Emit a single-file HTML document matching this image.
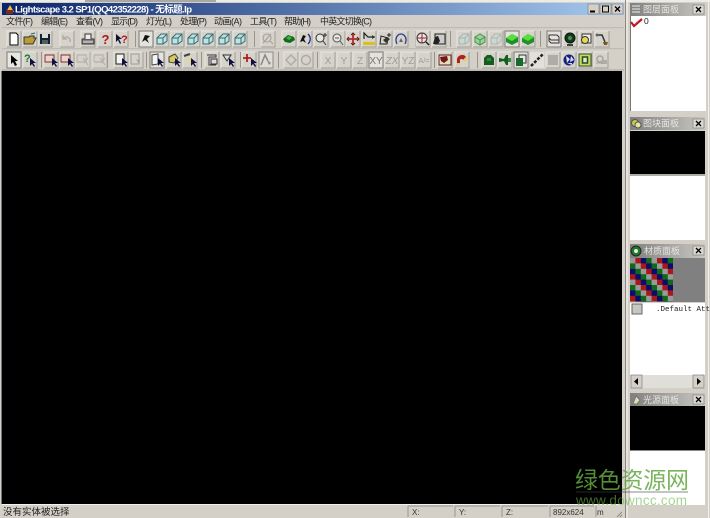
<!DOCTYPE html>
<html><head><meta charset="utf-8"><style>
html,body{margin:0;padding:0;background:#d4d0c8}
body{width:710px;height:518px;overflow:hidden;position:relative}
svg{position:absolute;left:0;top:0}
text{font-family:"Liberation Sans","WenQuanYi Zen Hei","Noto Sans CJK SC",sans-serif}
</style></head><body>
<svg width="710" height="518" viewBox="0 0 710 518" xmlns="http://www.w3.org/2000/svg">
<defs>
<linearGradient id="tb" x1="0" x2="1" y1="0" y2="0"><stop offset="0" stop-color="#0a246a"/><stop offset="1" stop-color="#a6caf0"/></linearGradient>
<linearGradient id="pt" x1="0" x2="1" y1="0" y2="0"><stop offset="0" stop-color="#808080"/><stop offset="1" stop-color="#c8c6c0"/></linearGradient>
<pattern id="ck" width="21.6" height="21.6" patternUnits="userSpaceOnUse" x="630" y="258">
<rect width="21.6" height="21.6" fill="#000"/>
<g fill="#9a9a9a"><rect x="0" y="0" width="5.4" height="5.4"/><rect x="5.4" y="5.4" width="5.4" height="5.4"/><rect x="10.8" y="10.8" width="5.4" height="5.4"/><rect x="16.2" y="16.2" width="5.4" height="5.4"/></g>
<g fill="#a81818"><rect x="5.4" y="0" width="5.4" height="5.4"/><rect x="10.8" y="5.4" width="5.4" height="5.4"/><rect x="16.2" y="10.8" width="5.4" height="5.4"/><rect x="0" y="16.2" width="5.4" height="5.4"/></g>
<g fill="#0b0b70"><rect x="10.8" y="0" width="5.4" height="5.4"/><rect x="16.2" y="5.4" width="5.4" height="5.4"/><rect x="0" y="10.8" width="5.4" height="5.4"/><rect x="5.4" y="16.2" width="5.4" height="5.4"/></g>
<g fill="#0f6a18"><rect x="16.2" y="0" width="5.4" height="5.4"/><rect x="0" y="5.4" width="5.4" height="5.4"/><rect x="5.4" y="10.8" width="5.4" height="5.4"/><rect x="10.8" y="16.2" width="5.4" height="5.4"/></g>
</pattern>
<g id="b"><rect x="-7" y="-8" width="14" height="16" fill="#d6d3cb"/><path d="M-7 8V-8H7" fill="none" stroke="#e8e6e0"/><path d="M-7 8H7V-8" fill="none" stroke="#a09e97"/></g>
<g id="a"><path d="M-1-3V5L1 3 3 6 4 5 2 2 5 2Z" fill="#101040"/></g>
<g id="cube"><path d="M-5-1 -1-5H5V2L1 5H-5Z" fill="#bfe3e2" stroke="#3a6a70"/><path d="M-5-1H1V5M1-1 5-5" fill="none" stroke="#3a6a70"/></g>
<g id="gc"><path d="M-6-1 0-5 6-2V3L0 6-6 3Z" fill="#1f8f2c"/><path d="M-6-1 0 2 6-2 0-5Z" fill="#55e03a"/></g>
</defs>

<!-- top strip -->
<rect width="710" height="518" fill="#d4d0c8"/>
<rect x="0" y="0" width="710" height="2" fill="#ecebe6"/>
<rect x="85" y="0" width="131" height="2" fill="#aaa8a2"/>
<!-- title bar -->
<rect x="2" y="3" width="622" height="12" fill="url(#tb)"/>
<path d="M6 12 10 5 14 12Z" fill="#e8c040"/><rect x="6" y="10" width="7" height="4" fill="#7a2a20"/>
<text x="15" y="12.500" font-size="9.500" font-weight="bold" fill="#fff" textLength="177">Lightscape 3.2 SP1(QQ42352228) - 无标题.lp</text>
<g><rect x="588" y="4" width="11" height="10" fill="#d4d0c8" stroke="#777" stroke-width=".6"/><rect x="590" y="10.500" width="5" height="2" fill="#000"/>
<rect x="600" y="4" width="11" height="10" fill="#d4d0c8" stroke="#777" stroke-width=".6"/><rect x="602.500" y="6" width="6" height="6" fill="none" stroke="#000"/>
<rect x="612" y="4" width="11" height="10" fill="#d4d0c8" stroke="#777" stroke-width=".6"/><path d="M615 6.500 620 11.500M620 6.500 615 11.500" stroke="#000" stroke-width="1.300"/></g>
<!-- menu -->
<g font-size="9" fill="#222">
<text x="6" y="24.500" textLength="27">文件(F)</text><text x="41" y="24.500" textLength="27">编辑(E)</text><text x="76" y="24.500" textLength="27">查看(V)</text><text x="111" y="24.500" textLength="27">显示(D)</text><text x="146" y="24.500" textLength="26">灯光(L)</text><text x="180" y="24.500" textLength="27">处理(P)</text><text x="214" y="24.500" textLength="28">动画(A)</text><text x="250" y="24.500" textLength="27">工具(T)</text><text x="284" y="24.500" textLength="27">帮助(H)</text><text x="320" y="24.500" textLength="52">中英文切换(C)</text>
</g>
<path d="M2 28.500H624" stroke="#f4f3ef"/><path d="M2 28H624" stroke="#a8a69f"/>
<path d="M2 49.500H624" stroke="#f4f3ef"/><path d="M2 49H624" stroke="#a8a69f"/>
<path d="M2 70H624" stroke="#a8a69f"/>

<!-- toolbar separators -->
<g stroke="#96948d" fill="none"><path d="M135.500 31V47M254.500 31V47M415.500 31V47M450.500 31V47M540.500 31V47M41.500 52V68M107.500 52V68M146.500 52V68M201.500 52V68M240.500 52V68M278.500 52V68M317.500 52V68M434.500 52V68M477.500 52V68"/></g>

<!-- row 1 -->
<g transform="translate(14 39)"><use href="#b"/><path d="M-4-6H2L4-4V6H-4Z" fill="#fff" stroke="#000"/></g>
<g transform="translate(30 39)"><use href="#b"/><path d="M-6-2H-1L0-3H4V-1H6L3 5H-6Z" fill="#b99c35" stroke="#333"/><path d="M1-5 5-6" stroke="#177" /></g>
<g transform="translate(45 39)"><use href="#b"/><rect x="-5" y="-5" width="10" height="10" fill="#123" /><rect x="-3" y="-5" width="6" height="4" fill="#d8dcd8"/><rect x="-3" y="1" width="6" height="4" fill="#50605a"/></g>
<g transform="translate(67 39)"><use href="#b"/><path d="M3 3C4-2-1-3-3-1M-4-4V0H0" fill="none" stroke="#a8a69f" stroke-width="1.200"/></g>
<g transform="translate(88 39)"><use href="#b"/><path d="M-6 0H6V5H-6Z" fill="#88867f" stroke="#333"/><path d="M-3 0V-5H3V0" fill="#eee" stroke="#333"/><path d="M-5 3H5" stroke="#ddd"/></g>
<g transform="translate(105 39)"><use href="#b"/><text x="-3.500" y="5" font-size="13" font-weight="bold" fill="#b01818">?</text></g>
<g transform="translate(121 39)"><use href="#b"/><path d="M-5-5V3L-3 1-1 5 0 4-2 0H1Z" fill="#101030"/><text x="0" y="4" font-size="11" font-weight="bold" fill="#b01818">?</text></g>
<g transform="translate(146 39)"><rect x="-7" y="-8" width="14" height="16" fill="#e4e2dc" stroke="#7c7a74"/><path d="M-4 3-1-4 4-3 1 0 3 4-1 1Z" fill="#111"/></g>
<g transform="translate(162 39)"><use href="#b"/><use href="#cube"/></g>
<g transform="translate(177 39)"><use href="#b"/><use href="#cube"/></g>
<g transform="translate(193 39)"><use href="#b"/><use href="#cube"/></g>
<g transform="translate(208 39)"><use href="#b"/><use href="#cube"/></g>
<g transform="translate(224 39)"><use href="#b"/><use href="#cube"/></g>
<g transform="translate(240 39)"><use href="#b"/><use href="#cube"/></g>
<g transform="translate(268 39)"><use href="#b"/><circle cx="-1" cy="-1" r="4" fill="none" stroke="#a09e97"/><path d="M2 2 5 5M-5 4 3-5" stroke="#a09e97"/></g>
<g transform="translate(289 39)"><use href="#b"/><path d="M-6 0-1-4 5-2 6 1 1 4-4 3Z" fill="#136a1c"/><path d="M-3-1 0-3 3-1 0 1Z" fill="#48b040"/></g>
<g transform="translate(305 39)"><use href="#b"/><path d="M-5 3-2-4 1-3-1 0 1 4-2 2Z" fill="#111"/><path d="M3-5C6-2 6 2 3 5" fill="none" stroke="#1a2a90" stroke-width="1.300"/></g>
<g transform="translate(321 39)"><use href="#b"/><circle cx="-1" cy="-1" r="4" fill="#e6e6e2" stroke="#333"/><path d="M2 2 5 6M4-6V-2M2-4H6" stroke="#333" fill="none"/></g>
<g transform="translate(338 39)"><use href="#b"/><circle cx="-1" cy="-1" r="4" fill="#e6e6e2" stroke="#555"/><path d="M2 2 5 6M-3-1H1" stroke="#555" fill="none"/></g>
<g transform="translate(353 39)"><use href="#b"/><path d="M0-6V6M-6 0H6" stroke="#a83030" stroke-width="1.800"/><path d="M-2-4 0-6 2-4M-2 4 0 6 2 4M-4-2-6 0-4 2M4-2 6 0 4 2" fill="none" stroke="#701818"/></g>
<g transform="translate(369 39)"><use href="#b"/><rect x="-6" y="3" width="12" height="3" fill="#d8c020"/><path d="M-5 0V-6L-1-2H6" fill="none" stroke="#222" stroke-width="1.200"/><path d="M3-4 6-2 3 0" fill="#333"/></g>
<g transform="translate(385 39)"><use href="#b"/><path d="M-5 5-4-3 3-1 2 5Z" fill="none" stroke="#222"/><path d="M-2 1 2-2 5 0 1 4Z" fill="#333"/><path d="M4-6V-2M2-4H6" stroke="#222" fill="none"/></g>
<g transform="translate(401 39)"><use href="#b"/><path d="M-4 5C-7-1-3-5 0-5S7-1 4 5" fill="none" stroke="#2c3a90" stroke-width="1.300"/><path d="M-2 3 0-1 2 3Z" fill="#666"/></g>
<g transform="translate(423 39)"><use href="#b"/><circle cx="-1" cy="-1" r="5" fill="#e6e6e2" stroke="#333"/><path d="M-6-1H4M-1-6V4" stroke="#a02020" fill="none"/><path d="M3 3 6 6" stroke="#222" stroke-width="1.500"/></g>
<g transform="translate(439 39)"><use href="#b"/><rect x="-4" y="-5" width="10" height="10" fill="#ccc" stroke="#222"/><path d="M-6 5-4-2-1-3 1 2-1 5Z" fill="#222"/></g>
<g transform="translate(464 39)"><use href="#b"/><g opacity=".3"><use href="#cube"/></g></g>
<g transform="translate(480 39)"><use href="#b"/><path d="M-5-2 0-5 5-2V3L0 6-5 3Z" fill="#9bd49a" stroke="#4a8f4a"/><path d="M-5-2 0 1 5-2M0 1V6" stroke="#4a8f4a" fill="none"/></g>
<g transform="translate(496 39)"><use href="#b"/><g opacity=".25"><use href="#cube"/></g></g>
<g transform="translate(512 39)"><rect x="-7" y="-8" width="14" height="16" fill="#e4e2dc" stroke="#7c7a74"/><use href="#gc"/></g>
<g transform="translate(528 39)"><use href="#b"/><use href="#gc"/></g>
<g transform="translate(554 39)"><rect x="-7" y="-8" width="14" height="16" fill="#e4e2dc" stroke="#7c7a74"/><path d="M-5-4H3L5-2V1H-3L-5-1ZM-5-1V2L-3 4H5V1" fill="none" stroke="#333"/></g>
<g transform="translate(570 39)"><use href="#b"/><circle cx="0" cy="-1" r="5" fill="#123a20" stroke="#111"/><circle cx="0" cy="-1" r="2" fill="#3a9a4a"/><path d="M-3 6H3" stroke="#111" stroke-width="1.500"/></g>
<g transform="translate(586 39)"><use href="#b"/><rect x="-4" y="-5" width="9" height="9" fill="#eee" stroke="#333"/><circle cx="-1" cy="1" r="3.500" fill="#e6d850" stroke="#333"/></g>
<g transform="translate(602 39)"><use href="#b"/><path d="M-5-4H0L3 3" fill="none" stroke="#333" stroke-width="1.500"/><path d="M1 3H6L5 6H2Z" fill="#7a5a20"/><circle cx="-5" cy="-4" r="1.500" fill="#666"/></g>

<!-- row 2 -->
<g transform="translate(14 60)"><rect x="-7" y="-8" width="14" height="16" fill="#e8e6e0" stroke="#7c7a74"/><path d="M-3-5V4L-1 2 1 6 3 5 1 1H4Z" fill="#000"/></g>
<g transform="translate(30 60)"><use href="#b"/><text x="-6" y="2" font-size="11" font-weight="bold" fill="#137a30">?</text><use href="#a" x="1" y="1"/></g>
<g transform="translate(51 60)"><use href="#b"/><rect x="-6" y="-5" width="9" height="7" fill="#e2d8d0" stroke="#902828"/><use href="#a" x="2" y="1"/></g>
<g transform="translate(67 60)"><use href="#b"/><rect x="-6" y="-5" width="9" height="7" fill="#e2d8d0" stroke="#902828"/><use href="#a" x="2" y="1"/></g>
<g transform="translate(83 60)" opacity=".7"><use href="#b"/><rect x="-6" y="-5" width="9" height="7" fill="none" stroke="#a09e97"/><path d="M0-2 5 5M5-2 1 3" stroke="#a09e97" fill="none"/></g>
<g transform="translate(100 60)" opacity=".7"><use href="#b"/><rect x="-6" y="-5" width="9" height="7" fill="none" stroke="#a09e97"/><path d="M0-2 5 5M5-2 1 3" stroke="#a09e97" fill="none"/></g>
<g transform="translate(121 60)"><use href="#b"/><rect x="-5" y="-6" width="8" height="10" fill="#f4f4f0" stroke="#222"/><use href="#a" x="2" y="1"/></g>
<g transform="translate(136 60)"><use href="#b"/><rect x="-5" y="-6" width="8" height="10" fill="none" stroke="#a09e97"/><path d="M0-1 3 4 4 1Z" fill="#a09e97"/></g>
<g transform="translate(157 60)"><rect x="-7" y="-8" width="14" height="16" fill="#e4e2dc" stroke="#7c7a74"/><path d="M-5-5 1-6V4L-5 5Z" fill="#f4f4f0" stroke="#444"/><use href="#a" x="2" y="1"/></g>
<g transform="translate(174 60)"><use href="#b"/><path d="M-5-3 1-6 4-2 0 3-5 2Z" fill="#d8c860" stroke="#444"/><use href="#a" x="2" y="1"/></g>
<g transform="translate(190 60)"><use href="#b"/><path d="M-6-4 0-6" stroke="#444" stroke-width="2"/><path d="M-3 3-1-3 3 0Z" fill="#e6dc70"/><use href="#a" x="2" y="1"/></g>
<g transform="translate(212 60)"><use href="#b"/><path d="M-5-5H4V-3H-3V5H4" fill="#e4e4e0" stroke="#333"/><path d="M-1-1H5V4H-1Z" fill="#ddd" stroke="#333"/></g>
<g transform="translate(228 60)"><use href="#b"/><path d="M-5-5H3L-1 1Z" fill="#ddd" stroke="#333"/><use href="#a" x="2" y="1"/></g>
<g transform="translate(249 60)"><use href="#b"/><path d="M-2-6V2M-6-2H2" stroke="#b02020" stroke-width="1.800"/><use href="#a" x="3" y="1"/></g>
<g transform="translate(266 60)"><rect x="-7" y="-8" width="14" height="16" fill="#dedcd6" stroke="#8e8c86"/><path d="M-5 5-1-5 2 1" fill="none" stroke="#8a8880" stroke-width="1.500"/><path d="M1 0 3 5 5 3Z" fill="#8a8880"/></g>
<g transform="translate(291 60)"><use href="#b"/><path d="M0-5 5 0 0 5-5 0Z" fill="none" stroke="#aeaca5" stroke-width="1.500"/></g>
<g transform="translate(306 60)"><use href="#b"/><circle r="4.500" fill="none" stroke="#aeaca5" stroke-width="1.500"/></g>
<g font-size="10" fill="#9e9c95" text-anchor="middle">
<g transform="translate(328 60)"><use href="#b"/><text y="4">X</text></g>
<g transform="translate(344 60)"><use href="#b"/><text y="4">Y</text></g>
<g transform="translate(360 60)"><use href="#b"/><text y="4">Z</text></g>
<g transform="translate(376 60)"><rect x="-7" y="-8" width="14" height="16" fill="#e4e2dc" stroke="#7c7a74"/><text y="4" fill="#77756f">XY</text></g>
<g transform="translate(392 60)"><use href="#b"/><text y="4" font-style="italic">ZX</text></g>
<g transform="translate(408 60)"><use href="#b"/><text y="4">YZ</text></g>
<g transform="translate(424 60)"><use href="#b"/><text y="3" font-size="7">A/=</text></g>
</g>
<g transform="translate(445 60)"><use href="#b"/><rect x="-6" y="-5" width="12" height="10" fill="#e8dcc0" stroke="#5a2020"/><path d="M-5-3 2-4 3 0-1 3-4 1Z" fill="#701818"/></g>
<g transform="translate(462 60)"><use href="#b"/><path d="M-5 3V0A5 5 0 0 1 4-3L1 0A1.500 1.500 0 0 0-2 1V5Z" fill="#b02020"/><path d="M-5 3H-2V5H-5ZM1 0 4-3 6-1 3 2Z" fill="#e8d060"/></g>
<g transform="translate(489 60)"><use href="#b"/><path d="M-5-2-2-5H2L5-2V5H-5Z" fill="#145c20"/><path d="M-2-2H2V1H-2Z" fill="#2c8a3a"/></g>
<g transform="translate(505 60)"><use href="#b"/><path d="M-6-2-1-1 1-5 3-5V5H1L-1 1-6 2Z" fill="#145c20"/><path d="M3-2H6V2H3Z" fill="#2c8a3a"/></g>
<g transform="translate(521 60)"><rect x="-7" y="-8" width="14" height="16" fill="#e4e2dc" stroke="#7c7a74"/><rect x="-2" y="-5" width="7" height="8" fill="#e6e6e0" stroke="#333"/><rect x="-5" y="-2" width="7" height="8" fill="#176a2a"/></g>
<g transform="translate(537 60)"><rect x="-7" y="-8" width="14" height="16" fill="#e2e0da"/><path d="M-6 6 6-6" stroke="#222" stroke-width="2.500" stroke-dasharray="3 1.500"/></g>
<g transform="translate(553 60)"><use href="#b"/><rect x="-5" y="-5" width="10" height="10" fill="#aeaca6"/></g>
<g transform="translate(569 60)"><use href="#b"/><circle r="5.500" fill="#14207e"/><path d="M-3-4 1-1-2 3ZM2-4 5 0 1 2ZM-2 3H3V5Z" fill="#d8dcec"/></g>
<g transform="translate(585 60)"><use href="#b"/><rect x="-6" y="-6" width="12" height="12" fill="#c8d860" stroke="#30502a"/><rect x="-2.500" y="-3" width="5" height="6" fill="#e8e8d0" stroke="#234a20" stroke-width="1.500"/></g>
<g transform="translate(601 60)"><use href="#b"/><circle cx="-1" cy="-1" r="3" fill="none" stroke="#a5a39c" stroke-width="1.500"/><rect x="0" y="0" width="6" height="4" fill="#aeaca6"/><path d="M-5 3H2" stroke="#a5a39c"/></g>

<!-- main canvas -->
<rect x="2" y="71" width="620" height="433" fill="#000"/>
<path d="M1.500 71V504" stroke="#777"/>
<!-- status bar -->
<path d="M2 504.500H624" stroke="#f2f1ed"/>
<text x="3" y="515" font-size="9.500" fill="#222">没有实体被选择</text>
<g stroke="#98968f" fill="none"><path d="M408 506H453M408 506V517M455 506H500M455 506V517M502 506H548M502 506V517M550 506H594M550 506V517M596 506V517"/></g>
<g font-size="8" fill="#333"><text x="412" y="515">X:</text><text x="459" y="515">Y:</text><text x="506" y="515">Z:</text><text x="553" y="515">892x624</text><text x="597" y="515">m</text></g>
<path d="M617 517 623 511M620 517 623 514" stroke="#8e8c86"/>
<!-- window right edge & panels bg -->
<rect x="622" y="71" width="5" height="447" fill="#d4d0c8"/>
<path d="M625.500 0V518" stroke="#8a8882"/>
<path d="M627 0V518" stroke="#f8f8f5"/>
<path d="M708.500 0V518" stroke="#f1f0ec"/>

<!-- panels -->
<g font-size="9" fill="#e6e5e0">
<rect x="630" y="3" width="75" height="13" fill="url(#pt)"/><text x="643" y="12.500">图层面板</text>
<rect x="630" y="117" width="75" height="13" fill="url(#pt)"/><text x="643" y="126.500">图块面板</text>
<rect x="630" y="244" width="75" height="14" fill="url(#pt)"/><text x="644" y="254">材质面板</text>
<rect x="630" y="393" width="75" height="13" fill="url(#pt)"/><text x="643" y="403">光源面板</text>
</g>
<g fill="none">
<path d="M632 6H640M632 9H640M632 12H640" stroke="#eee"/>
<circle cx="635" cy="123" r="3.500" fill="#c8c850" stroke="#555"/><circle cx="638" cy="125" r="3" fill="#e6e6a0" stroke="#555"/>
<circle cx="636" cy="251" r="5" fill="#1a7a2a" stroke="#222"/><circle cx="636" cy="251" r="2" fill="#e8e8d8"/>
<path d="M633 404 636 396 640 400 637 404Z" fill="#e0e0b0" stroke="#777"/>
</g>
<g>
<rect x="693" y="5" width="11" height="9" fill="#dcd9d2" stroke="#808080" stroke-width=".7"/><path d="M696 7 701 12M701 7 696 12" stroke="#000" stroke-width="1.300"/>
<rect x="693" y="119" width="11" height="9" fill="#dcd9d2" stroke="#808080" stroke-width=".7"/><path d="M696 121 701 126M701 121 696 126" stroke="#000" stroke-width="1.300"/>
<rect x="693" y="246" width="11" height="9" fill="#dcd9d2" stroke="#808080" stroke-width=".7"/><path d="M696 248 701 253M701 248 696 253" stroke="#000" stroke-width="1.300"/>
<rect x="693" y="395" width="11" height="9" fill="#dcd9d2" stroke="#808080" stroke-width=".7"/><path d="M696 397 701 402M701 397 696 402" stroke="#000" stroke-width="1.300"/>
</g>
<!-- layer list -->
<rect x="630" y="16" width="76" height="95" fill="#fff"/>
<path d="M630.500 16V111" stroke="#777"/>
<path d="M631 22 634 26 642 19" fill="none" stroke="#c01820" stroke-width="2.200"/>
<text x="644" y="24" font-size="8.500" fill="#222">0</text>
<!-- block -->
<rect x="630" y="131" width="75" height="43" fill="#000"/>
<rect x="630" y="176" width="75" height="64" fill="#fff"/>
<path d="M630 175H705" stroke="#8a8882"/>
<!-- material -->
<rect x="630" y="258" width="75" height="44" fill="#808080"/>
<rect x="630" y="258" width="43" height="43.500" fill="url(#ck)"/>
<rect x="630" y="303" width="75" height="72" fill="#fff"/>
<rect x="632" y="304" width="10" height="10" fill="#c8c6c0" stroke="#666"/>
<text x="656" y="311" font-size="7.500" style="font-family:'Liberation Mono',monospace" fill="#222">.Default Att</text>
<rect x="630" y="375" width="75" height="13" fill="#e0ded8"/>
<rect x="631" y="375" width="11" height="13" fill="#d4d0c8" stroke="#808080" stroke-width=".7"/><path d="M638 378V385L634 381.500Z" fill="#000"/>
<rect x="693" y="375" width="11" height="13" fill="#d4d0c8" stroke="#808080" stroke-width=".7"/><path d="M697 378V385L701 381.500Z" fill="#000"/>
<!-- light -->
<rect x="630" y="406" width="75" height="44" fill="#000"/>
<rect x="630" y="451" width="75" height="54" fill="#fff"/>
<path d="M630 450.500H705" stroke="#8a8882"/>

<!-- watermark -->
<path d="M576 492H688" stroke="#3a3a3a" stroke-opacity=".6"/>
<text x="575" y="488" font-size="23" fill="#62a83f" opacity=".85" textLength="114" style="font-family:'Noto Sans CJK SC','WenQuanYi Zen Hei',sans-serif">绿色资源网</text>
<text x="576" y="505" font-size="13.500" fill="#6cb84a" opacity=".6" textLength="111">www.downcc.com</text>
</svg>
</body></html>
